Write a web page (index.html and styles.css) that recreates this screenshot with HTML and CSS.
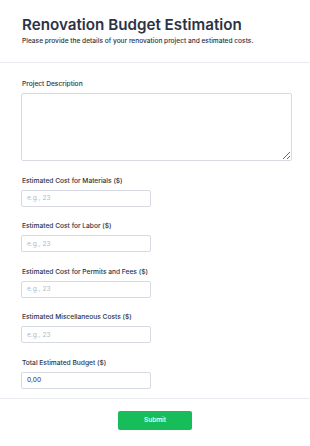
FILE: index.html
```html
<!DOCTYPE html>
<html lang="en">
<head>
  <meta charset="UTF-8" />
  <meta name="viewport" content="width=device-width, initial-scale=1.0"/>
  <title>Renovation Budget Estimation</title>
  <link rel="stylesheet" href="styles.css">
</head>
<body>
  <main class="form-card">
    <header class="form-header">
      <h1>Renovation Budget Estimation</h1>
      <p>Please provide the details of your renovation project and estimated costs.</p>
    </header>

    <form class="form-body">
      <div class="field field-wide">
        <label for="description">Project Description</label>
        <textarea id="description"></textarea>
      </div>

      <div class="field">
        <label for="materials">Estimated Cost for Materials ($)</label>
        <input type="text" id="materials" placeholder="e.g., 23">
      </div>

      <div class="field">
        <label for="labor">Estimated Cost for Labor ($)</label>
        <input type="text" id="labor" placeholder="e.g., 23">
      </div>

      <div class="field">
        <label for="permits">Estimated Cost for Permits and Fees ($)</label>
        <input type="text" id="permits" placeholder="e.g., 23">
      </div>

      <div class="field">
        <label for="misc">Estimated Miscellaneous Costs ($)</label>
        <input type="text" id="misc" placeholder="e.g., 23">
      </div>

      <div class="field">
        <label for="total">Total Estimated Budget ($)</label>
        <input type="text" id="total" value="0,00" readonly>
      </div>
    </form>

    <footer class="form-footer">
      <button type="button" class="submit-btn">Submit</button>
    </footer>
  </main>
</body>
</html>
```

FILE: styles.css
```css
* {
  box-sizing: border-box;
}

html, body {
  margin: 0;
  background: #fff;
  font-family: Inter, "Noto Sans", Arial, sans-serif;
  color: #2c3345;
}

.form-header {
  padding: 16px 22px 17px;
  border-bottom: 1px solid #eaebf0;
}

.form-header h1 {
  margin: 0;
  font-size: 15.2px;
  line-height: 18px;
  font-weight: 600;
}

.form-header p {
  margin: 3px 0 0;
  font-size: 6.6px;
  line-height: 8px;
  font-weight: 500;
}

.form-body {
  padding: 17px 21px 9px;
  border-bottom: 1px solid #eaebf0;
  display: flex;
  flex-direction: column;
  gap: 15.5px;
}

.field {
  display: flex;
  flex-direction: column;
  align-items: flex-start;
  gap: 5px;
}

.field label {
  padding-left: 1px;
  font-size: 6.65px;
  line-height: 8px;
  font-weight: 500;
}

.field input,
.field textarea {
  width: 130px;
  height: 17px;
  margin: 0;
  padding: 0 5px;
  border: 1px solid #d8dae3;
  border-radius: 2px;
  background: #fff;
  font-family: inherit;
  font-size: 6.6px;
  color: #2c3345;
  outline: none;
}

.field input::placeholder {
  color: #b3b8c4;
}

.field-wide textarea {
  width: 271px;
  height: 68px;
  resize: vertical;
}

.form-footer {
  display: flex;
  justify-content: center;
  padding: 12px 0 20px;
}

.submit-btn {
  width: 74px;
  height: 19px;
  border: none;
  border-radius: 2px;
  background: #18bd5b;
  color: #fff;
  font-family: inherit;
  font-size: 6.6px;
  font-weight: 500;
}
```
